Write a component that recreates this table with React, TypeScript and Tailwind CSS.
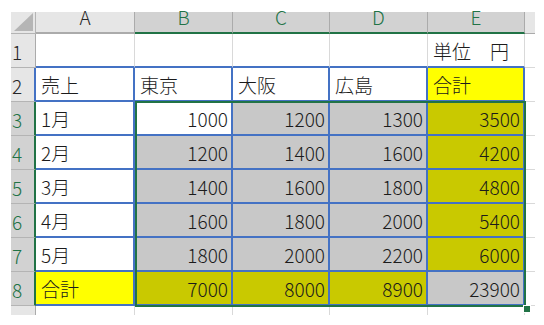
import React from "react";

type Cell = { v: string; align?: "l" | "r"; bg?: "white" | "gray" | "yellow" | "olive" };

const cols = ["A", "B", "C", "D", "E"];

const rows: Cell[][] = [
  [{ v: "" }, { v: "" }, { v: "" }, { v: "" }, { v: "単位　円" }],
  [{ v: "売上" }, { v: "東京" }, { v: "大阪" }, { v: "広島" }, { v: "合計", bg: "yellow" }],
  [{ v: "1月" }, { v: "1000", align: "r" }, { v: "1200", align: "r", bg: "gray" }, { v: "1300", align: "r", bg: "gray" }, { v: "3500", align: "r", bg: "olive" }],
  [{ v: "2月" }, { v: "1200", align: "r", bg: "gray" }, { v: "1400", align: "r", bg: "gray" }, { v: "1600", align: "r", bg: "gray" }, { v: "4200", align: "r", bg: "olive" }],
  [{ v: "3月" }, { v: "1400", align: "r", bg: "gray" }, { v: "1600", align: "r", bg: "gray" }, { v: "1800", align: "r", bg: "gray" }, { v: "4800", align: "r", bg: "olive" }],
  [{ v: "4月" }, { v: "1600", align: "r", bg: "gray" }, { v: "1800", align: "r", bg: "gray" }, { v: "2000", align: "r", bg: "gray" }, { v: "5400", align: "r", bg: "olive" }],
  [{ v: "5月" }, { v: "1800", align: "r", bg: "gray" }, { v: "2000", align: "r", bg: "gray" }, { v: "2200", align: "r", bg: "gray" }, { v: "6000", align: "r", bg: "olive" }],
  [{ v: "合計", bg: "yellow" }, { v: "7000", align: "r", bg: "olive" }, { v: "8000", align: "r", bg: "olive" }, { v: "8900", align: "r", bg: "olive" }, { v: "23900", align: "r", bg: "gray" }],
];

const bgClass = {
  white: "bg-white",
  gray: "bg-[#c8c8c8]",
  yellow: "bg-[#ffff00]",
  olive: "bg-[#c9c900]",
};

function CornerTriangle() {
  return (
    <svg width="24" height="22" viewBox="0 0 24 22" className="block">
      <polygon points="22,2 22,20 3,20" fill="#b5b5b5" />
    </svg>
  );
}

export default function App() {
  const font = { fontFamily: '"Noto Sans CJK JP", "Noto Sans", sans-serif' };

  return (
    <div className="w-[544px] h-[325px] bg-white overflow-hidden pt-[12px] pl-[11px]" style={font}>
      <div className="relative grid grid-cols-[25px_99px_98px_97px_98px_97px_10px] grid-rows-[22px_repeat(8,34px)_9px] w-fit text-[19px] leading-none font-light text-[#1b1b1b]">
        {/* header row */}
        <div className="bg-[#e6e6e6] border-r border-b border-[#b4b4b4] flex items-end justify-end">
          <CornerTriangle />
        </div>
        {cols.map((c) => {
          const sel = c !== "A";
          return (
            <div
              key={c}
              className={
                sel
                  ? "bg-[#d2d2d2] border-r border-r-[#ababab] border-b-2 border-b-[#217346] flex justify-center items-start leading-[10px] text-[#217346]"
                  : "bg-[#e6e6e6] border-r border-r-[#ababab] border-b-2 border-b-[#ababab] flex justify-center items-start leading-[10px] text-[#262626]"
              }
            >
              <span>{c}</span>
            </div>
          );
        })}
        <div className="bg-[#e6e6e6] border-b border-[#ababab]" />

        {rows.map((r, ri) => {
          const n = ri + 1;
          const selRow = n >= 3;
          return (
            <React.Fragment key={n}>
              <div
                className={
                  selRow
                    ? "bg-[#d2d2d2] border-b border-b-[#b4b4b4] border-r-2 border-r-[#217346] flex items-end pb-[6px] pl-[1px] text-[#217346]"
                    : n === 2
                    ? "bg-[#e6e6e6] border-b border-b-[#b4b4b4] border-r-2 border-r-[#4472c4] flex items-end pb-[6px] pl-[1px] text-[#262626]"
                    : "bg-[#e6e6e6] border-b border-b-[#b4b4b4] border-r border-r-[#ababab] flex items-end pb-[6px] pl-[1px] text-[#262626]"
                }
              >
                {n}
              </div>
              {r.map((c, ci) => {
                const bg = bgClass[c.bg ?? "white"];
                const border =
                  n === 1
                    ? "border-r border-r-[#d9d9d9] border-b-2 border-b-[#4472c4]"
                    : "border-r-2 border-b-2 border-[#4472c4]";
                const align = c.align === "r" ? "justify-end pr-[3px]" : "justify-start pl-[5px]";
                return (
                  <div key={ci} className={`${bg} ${border} ${align} flex items-end pb-[6px] whitespace-pre`}>
                    {c.v}
                  </div>
                );
              })}
              <div className="bg-white border-b border-[#d9d9d9]" />
            </React.Fragment>
          );
        })}

        {/* partial row 9 */}
        <div className="bg-[#e6e6e6] border-r border-[#ababab]" />
        {cols.map((c) => (
          <div key={c} className="bg-white border-r border-[#d9d9d9]" />
        ))}
        <div className="bg-white" />

        {/* selection B3:E8 */}
        <div className="absolute left-[124px] top-[89px] w-[391px] h-[206px] border-2 border-[#217346] pointer-events-none" />
        <div className="absolute left-[512px] top-[293px] w-[8px] h-[8px] bg-[#217346] border border-white" />
      </div>
    </div>
  );
}
